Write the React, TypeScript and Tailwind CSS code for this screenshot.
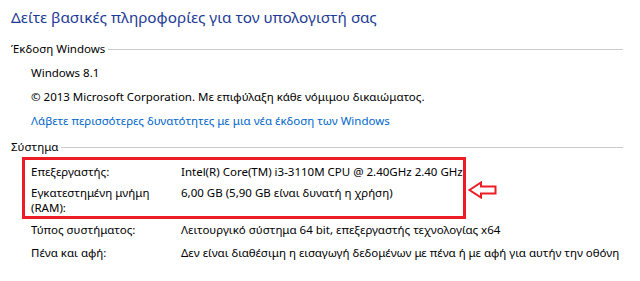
import React from 'react';

const LeftArrow = () => (
  <svg width="30" height="18" viewBox="0 0 30 18" className="block">
    <path
      d="M1.5 9 L13 1.5 L13 5.5 L27.5 5.5 L27.5 12.5 L13 12.5 L13 16.5 Z"
      fill="none"
      stroke="#ed1c24"
      strokeWidth="2"
      strokeLinejoin="miter"
    />
  </svg>
);

const SectionHeader = ({ title, className = '' }: { title: string; className?: string }) => (
  <div className={`flex items-center pl-[11px] pr-[17px] h-4 ${className}`}>
    <span className="leading-4 whitespace-nowrap">{title}</span>
    <div className="flex-1 h-px bg-[#cccccc] ml-[3px] mt-px" />
  </div>
);

const App = () => {
  const systemRows = [
    { label: 'Τύπος συστήματος:', value: 'Λειτουργικό σύστημα 64 bit, επεξεργαστής τεχνολογίας x64' },
    { label: 'Πένα και αφή:', value: 'Δεν είναι διαθέσιμη η εισαγωγή δεδομένων με πένα ή με αφή για αυτήν την οθόνη' },
  ];

  return (
    <div
      className="w-[640px] h-[281px] bg-white text-[11.5px] text-black overflow-hidden whitespace-nowrap"
      style={{ fontFamily: '"Noto Sans", "Open Sans", sans-serif' }}
    >
      <h1 className="pt-[7px] pl-[11px] text-[15.3px] leading-5 text-[#1e3c96]">
        Δείτε βασικές πληροφορίες για τον υπολογιστή σας
      </h1>

      <SectionHeader title="Έκδοση Windows" className="mt-[14px]" />
      <div className="mt-1 pl-[31px]">
        <div className="h-6 flex items-center">Windows 8.1</div>
        <div className="h-6 flex items-center">© 2013 Microsoft Corporation. Με επιφύλαξη κάθε νόμιμου δικαιώματος.</div>
        <div className="h-6 flex items-center text-[#0066cc]">Λάβετε περισσότερες δυνατότητες με μια νέα έκδοση των Windows</div>
      </div>

      <SectionHeader title="Σύστημα" className="mt-[6px]" />

      <div className="mt-[2px] ml-[22px] flex items-center">
        <div className="w-[444px] border-[3px] border-[#ed1c24] pl-[6px]">
          <div className="h-6 flex items-center">
            <div className="w-[150px] shrink-0">Επεξεργαστής:</div>
            <div>Intel(R) Core(TM) i3-3110M CPU @ 2.40GHz 2.40 GHz</div>
          </div>
          <div className="flex pt-px pb-px leading-[15px]">
            <div className="w-[150px] shrink-0">Εγκατεστημένη μνήμη<br />(RAM):</div>
            <div>6,00 GB (5,90 GB είναι δυνατή η χρήση)</div>
          </div>
        </div>
        <div className="ml-[2px] mt-[3px]">
          <LeftArrow />
        </div>
      </div>

      <div className="pl-[31px]">
        {systemRows.map((row, index) => (
          <div key={index} className={`${index === 0 ? 'h-[22px]' : 'h-6'} flex items-center`}>
            <div className="w-[150px] shrink-0">{row.label}</div>
            <div>{row.value}</div>
          </div>
        ))}
      </div>
    </div>
  );
};

export default App;
